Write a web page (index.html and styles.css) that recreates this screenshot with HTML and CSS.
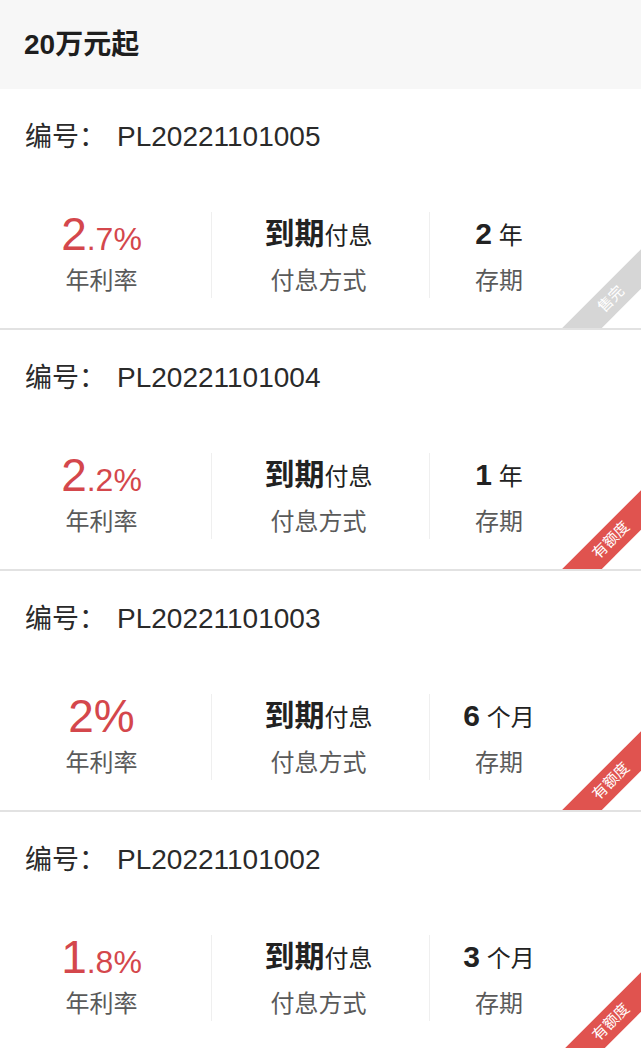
FILE: index.html
```html
<!DOCTYPE html>
<html lang="zh-CN">

<head>
    <meta charset="UTF-8">
    <meta name="viewport" content="width=device-width, initial-scale=1.0">
    <title>20万元起</title>
    <link rel="stylesheet" href="styles.css">
</head>

<body>
    <div class="head">20万元起</div>

    <div class="card">
        <div class="title"><span class="lab">编号：</span>PL20221101005</div>
        <div class="stats">
            <div class="col c1">
                <div class="val rate"><span class="big">2</span>.7%</div>
                <div class="lbl">年利率</div>
            </div>
            <div class="col c2">
                <div class="val"><b class="bold">到期</b>付息</div>
                <div class="lbl">付息方式</div>
            </div>
            <div class="col c3">
                <div class="val"><b class="num">2</b> 年</div>
                <div class="lbl">存期</div>
            </div>
        </div>
        <div class="tag gray">售完</div>
    </div>

    <div class="card">
        <div class="title"><span class="lab">编号：</span>PL20221101004</div>
        <div class="stats">
            <div class="col c1">
                <div class="val rate"><span class="big">2</span>.2%</div>
                <div class="lbl">年利率</div>
            </div>
            <div class="col c2">
                <div class="val"><b class="bold">到期</b>付息</div>
                <div class="lbl">付息方式</div>
            </div>
            <div class="col c3">
                <div class="val"><b class="num">1</b> 年</div>
                <div class="lbl">存期</div>
            </div>
        </div>
        <div class="tag red">有额度</div>
    </div>

    <div class="card">
        <div class="title"><span class="lab">编号：</span>PL20221101003</div>
        <div class="stats">
            <div class="col c1">
                <div class="val rate"><span class="big">2%</span></div>
                <div class="lbl">年利率</div>
            </div>
            <div class="col c2">
                <div class="val"><b class="bold">到期</b>付息</div>
                <div class="lbl">付息方式</div>
            </div>
            <div class="col c3">
                <div class="val"><b class="num">6</b> 个月</div>
                <div class="lbl">存期</div>
            </div>
        </div>
        <div class="tag red">有额度</div>
    </div>

    <div class="card">
        <div class="title"><span class="lab">编号：</span>PL20221101002</div>
        <div class="stats">
            <div class="col c1">
                <div class="val rate"><span class="big">1</span>.8%</div>
                <div class="lbl">年利率</div>
            </div>
            <div class="col c2">
                <div class="val"><b class="bold">到期</b>付息</div>
                <div class="lbl">付息方式</div>
            </div>
            <div class="col c3">
                <div class="val"><b class="num">3</b> 个月</div>
                <div class="lbl">存期</div>
            </div>
        </div>
        <div class="tag red">有额度</div>
    </div>
</body>

</html>
```

FILE: styles.css
```css
* {
    box-sizing: border-box;
    margin: 0;
    padding: 0;
}

body {
    font-family: "Liberation Sans", "Noto Sans CJK SC", sans-serif;
    background-color: white;
    color: #222;
}

.head {
    height: 89px;
    background-color: #f7f7f7;
    padding-left: 24px;
    font-size: 28px;
    font-weight: bold;
    line-height: 89px;
    color: #1e1e1e;
}

.card {
    position: relative;
    overflow: hidden;
    height: 241px;
    padding-top: 28px;
    border-bottom: 2px solid #e2e2e2;
}

.title {
    padding-left: 25px;
    font-size: 28px;
    line-height: 40px;
    color: #2a2a2a;
}

.lab {
    display: inline-block;
    width: 92px;
    font-size: 27px;
}

.stats {
    display: grid;
    grid-template-columns: 211px 219px 138px;
    margin-top: 55px;
}

.col {
    text-align: center;
    height: 86px;
}

.c1 {
    padding-right: 8px;
}

.c2 {
    padding-right: 4px;
    border-left: 1px solid #efefef;
    border-right: 1px solid #efefef;
}

.val {
    height: 44px;
    line-height: 44px;
    font-size: 24px;
    white-space: nowrap;
}

.rate {
    color: #d4474c;
    font-size: 32px;
}

.big {
    font-size: 46px;
}

.bold {
    font-size: 30px;
}

.num {
    font-size: 30px;
}

.lbl {
    margin-top: 5px;
    font-size: 24px;
    line-height: 40px;
    color: #5a5a5a;
}

.tag {
    position: absolute;
    right: -32px;
    bottom: 15px;
    width: 124px;
    height: 28px;
    line-height: 28px;
    text-align: center;
    font-size: 15px;
    color: white;
    transform: rotate(-45deg);
}

.gray {
    background-color: #d6d6d6;
}

.red {
    background-color: #e0534f;
}
```
